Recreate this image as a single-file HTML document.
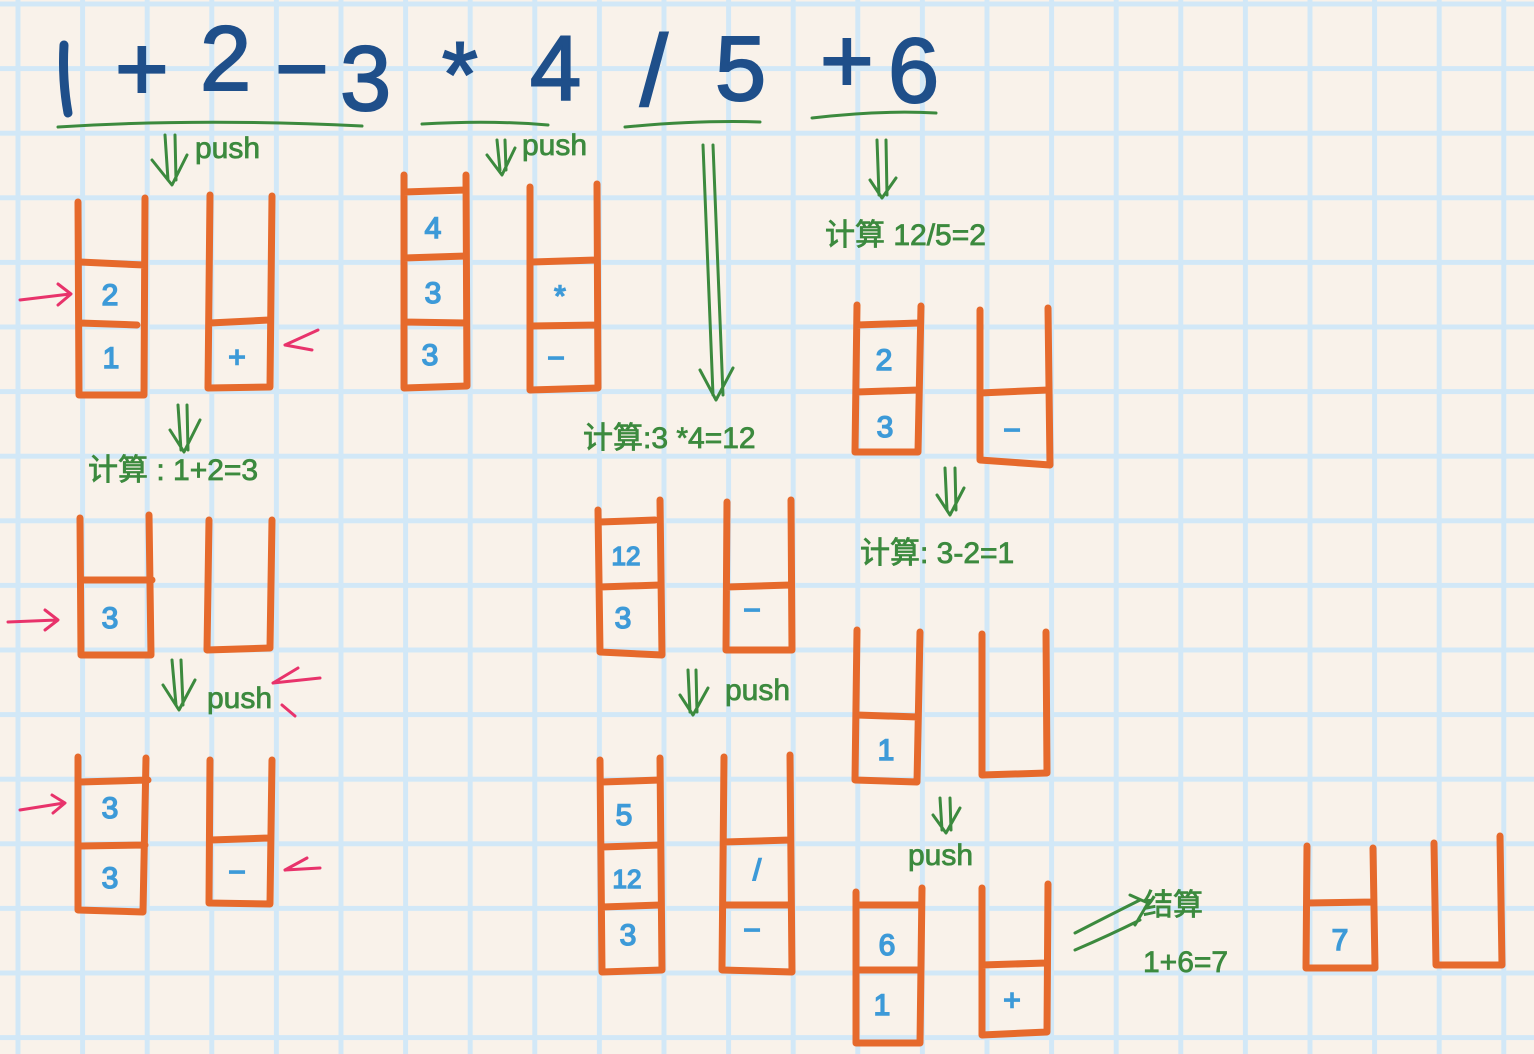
<!DOCTYPE html>
<html><head><meta charset="utf-8"><style>
html,body{margin:0;padding:0;background:#f9f2ea;}
svg{display:block}
.o{fill:none;stroke:#e66a2c;stroke-width:7;stroke-linecap:round;stroke-linejoin:round}
.g{fill:none;stroke:#3c8a3e;stroke-width:3;stroke-linecap:round;stroke-linejoin:round}
.p{fill:none;stroke:#e8336b;stroke-width:3;stroke-linecap:round;stroke-linejoin:round}
.bt{font-family:"Liberation Sans",sans-serif;fill:#3d9ad8;stroke:#3d9ad8;stroke-width:1.5;font-size:30px;text-anchor:middle}
.gt{font-family:"Liberation Sans","Noto Sans CJK SC",sans-serif;fill:#3c8a3e;stroke:#3c8a3e;stroke-width:0.8;font-size:30px}
.eq{font-family:"Liberation Sans",sans-serif;fill:#1f4f8a;stroke:#1f4f8a;stroke-width:2;font-size:92px}
</style></head><body>
<svg width="1534" height="1054" viewBox="0 0 1534 1054" xmlns="http://www.w3.org/2000/svg">
<defs>
<pattern id="gr" x="15.5" y="1.5" width="64.6" height="64.6" patternUnits="userSpaceOnUse">
<rect x="0" y="0" width="5" height="64.6" fill="#d2e8f7"/>
<rect x="0" y="0" width="64.6" height="5" fill="#d2e8f7"/>
</pattern>
</defs>
<rect width="1534" height="1054" fill="#f9f2ea"/>
<rect width="1534" height="1054" fill="url(#gr)"/>

<g class="eq">
<path d="M64 45 Q62 80 68 113" fill="none" stroke-width="9" stroke-linecap="round"/>
<text x="115" y="100">+</text>
<text x="200" y="90">2</text>
<text x="275" y="100">−</text>
<text x="340" y="110">3</text>
<text x="442" y="106">*</text>
<text x="530" y="100">4</text>
<text x="640" y="105" font-size="100">/</text>
<text x="715" y="100">5</text>
<text x="820" y="92">+</text>
<text x="888" y="102">6</text>
</g>
<path class="g" d="M58 127 Q200 118 362 126"/>
<path class="g" d="M422 124 Q490 120 548 125"/>
<path class="g" d="M625 127 Q700 120 760 122"/>
<path class="g" d="M812 118 Q880 110 936 113"/>

<path class="g" d="M165 135 L168 180 M175 135 L176 180 M152 160 L172 185 L187 155"/>
<text class="gt" x="195" y="158" font-size="26">push</text>
<path class="g" d="M497 140 L500 170 M505 140 L506 170 M487 155 L502 175 L515 148"/>
<text class="gt" x="522" y="155" font-size="26">push</text>
<path class="g" d="M703 145 L713 395 M713 145 L723 395 M700 370 L716 400 L733 368"/>
<path class="g" d="M877 140 L879 195 M886 140 L887 195 M870 180 L882 198 L896 178"/>
<text class="gt" x="825" y="245">计算 12/5=2</text>
<path class="g" d="M178 405 L181 450 M187 405 L188 450 M170 430 L184 452 L200 420"/>
<text class="gt" x="88" y="480">计算 : 1+2=3</text>
<text class="gt" x="583" y="448">计算:3 *4=12</text>
<path class="g" d="M945 468 L947 510 M955 468 L956 510 M937 495 L950 515 L964 488"/>
<text class="gt" x="860" y="563">计算: 3-2=1</text>
<path class="g" d="M172 660 L176 705 M181 660 L183 705 M163 685 L179 710 L195 680"/>
<text class="gt" x="207" y="708" font-size="28">push</text>
<path class="g" d="M688 670 L690 712 M696 670 L697 712 M680 695 L693 715 L708 688"/>
<text class="gt" x="725" y="700" font-size="28">push</text>
<path class="g" d="M940 798 L942 830 M950 798 L951 830 M933 815 L946 833 L960 808"/>
<text class="gt" x="908" y="865" font-size="28">push</text>
<path class="g" d="M1075 933 Q1110 915 1140 900 M1075 950 Q1110 935 1140 920 M1130 895 L1148 903 L1135 925"/>
<text class="gt" x="1143" y="915" font-size="40">结算</text>
<text class="gt" x="1143" y="972">1+6=7</text>

<path class="p" d="M20 300 L70 294 M58 284 L71 294 L58 305"/>
<path class="p" d="M285 345 L318 330 M285 345 L312 350"/>
<path class="p" d="M8 622 L57 620 M45 610 L58 620 L45 630"/>
<path class="p" d="M273 683 L320 678 M273 683 L298 668 M282 705 L295 716"/>
<path class="p" d="M20 810 L64 803 M52 795 L65 803 L53 813"/>
<path class="p" d="M285 870 L320 868 M285 870 L307 858"/>

<g class="o">
<path d="M78 202 L79 395 L144 395 L145 198 M80 262 L144 265 M80 323 L137 325"/>
<path d="M210 195 L208 388 L270 387 L272 196 M210 323 L269 320"/>
<path d="M404 175 L404 388 L467 386 L466 175 M404 192 L465 190 M404 258 L466 256 M404 322 L466 323"/>
<path d="M530 187 L530 390 L598 388 L597 184 M532 262 L596 260 M532 326 L597 325"/>
<path d="M857 305 L855 452 L918 452 L921 306 M857 325 L919 323 M857 392 L918 390"/>
<path d="M980 310 L980 460 L1050 465 L1048 308 M980 393 L1048 390"/>
<path d="M80 518 L81 655 L151 655 L149 515 M81 580 L152 580"/>
<path d="M209 520 L207 650 L270 648 L272 520"/>
<path d="M78 757 L78 910 L143 912 L146 758 M80 782 L148 780 M80 846 L145 845"/>
<path d="M210 760 L209 903 L270 904 L272 760 M211 840 L268 838"/>
<path d="M598 510 L600 652 L662 655 L660 500 M600 522 L655 520 M600 587 L660 585"/>
<path d="M727 502 L726 650 L792 650 L791 500 M727 587 L790 585"/>
<path d="M600 760 L602 972 L662 970 L660 758 M602 782 L660 780 M602 847 L660 845 M602 907 L660 905"/>
<path d="M724 757 L722 970 L792 972 L790 755 M724 842 L790 840 M724 905 L790 905"/>
<path d="M857 630 L855 780 L917 782 L920 632 M857 715 L918 717"/>
<path d="M982 634 L982 775 L1047 773 L1046 632"/>
<path d="M856 892 L856 1043 L920 1043 L922 888 M858 905 L920 905 M858 970 L920 970"/>
<path d="M982 888 L982 1035 L1047 1032 L1048 884 M982 965 L1046 963"/>
<path d="M1307 846 L1306 968 L1375 968 L1373 848 M1308 903 L1372 902"/>
<path d="M1434 843 L1436 965 L1502 965 L1500 836"/>
</g>

<g class="bt">
<text x="110" y="305">2</text><text x="111" y="368">1</text>
<text x="237" y="367">+</text>
<text x="433" y="238">4</text><text x="433" y="303">3</text><text x="430" y="365">3</text>
<text x="560" y="306">*</text><text x="556" y="368">−</text>
<text x="884" y="370">2</text><text x="885" y="437">3</text>
<text x="1012" y="440">−</text>
<text x="110" y="628">3</text>
<text x="110" y="818">3</text><text x="110" y="888">3</text>
<text x="237" y="882">−</text>
<text x="626" y="565" font-size="26">12</text><text x="623" y="628">3</text>
<text x="752" y="620">−</text>
<text x="624" y="825">5</text><text x="627" y="888" font-size="26">12</text><text x="628" y="945">3</text>
<text x="757" y="880">/</text><text x="752" y="940">−</text>
<text x="886" y="760">1</text>
<text x="887" y="955">6</text><text x="882" y="1015">1</text>
<text x="1012" y="1010">+</text>
<text x="1340" y="950">7</text>
</g>
</svg>
</body></html>
